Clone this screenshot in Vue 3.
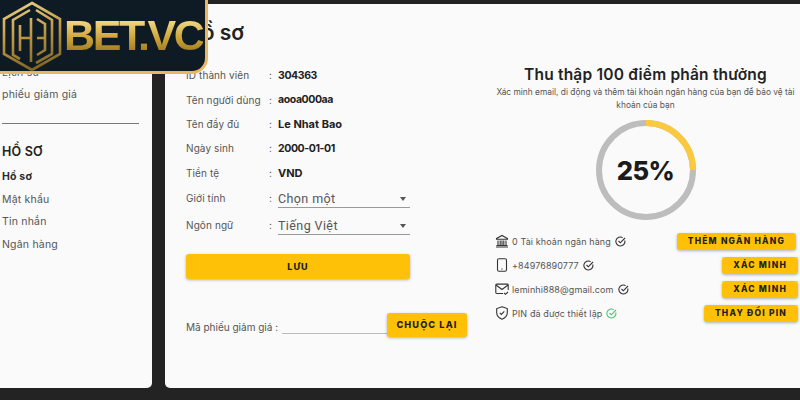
<script setup>
const profile = [
  { label: 'ID thành viên', value: '304363', numeric: true },
  { label: 'Tên người dùng', value: 'aooa000aa', numeric: true },
  { label: 'Tên đầy đủ', value: 'Le Nhat Bao' },
  { label: 'Ngày sinh', value: '2000-01-01', numeric: true },
  { label: 'Tiền tệ', value: 'VND' },
]
const selects = [
  ['Giới tính', 'Chọn một'],
  ['Ngôn ngữ', 'Tiếng Việt'],
]
const nav = ['Hồ sơ', 'Mật khẩu', 'Tin nhắn', 'Ngân hàng']
const tasks = [
  { icon: 'bank', text: '0 Tài khoản ngân hàng', action: 'THÊM NGÂN HÀNG', wide: true },
  { icon: 'phone', text: '+84976890777', action: 'XÁC MINH' },
  { icon: 'mail', text: 'leminhi888@gmail.com', action: 'XÁC MINH' },
  { icon: 'shield', text: 'PIN đã được thiết lập', action: 'THAY ĐỔI PIN', done: true },
]
</script>

<template>
  <div class="page">
    <aside class="side">
      <div class="side-link">Lịch sử</div>
      <div class="side-link">phiếu giảm giá</div>
      <hr class="rule" />
      <div class="side-head">HỒ SƠ</div>
      <div v-for="(n, i) in nav" :key="n" class="side-link" :class="{ active: i === 0 }">{{ n }}</div>
    </aside>

    <main class="panel">
      <section class="left">
        <h1 class="title">Hồ sơ</h1>
        <div v-for="p in profile" :key="p.label" class="row">
          <span class="label">{{ p.label }}</span>
          <span class="colon">:</span>
          <b class="value" :class="{ num: p.numeric }">{{ p.value }}</b>
        </div>
        <div v-for="s in selects" :key="s[0]" class="row select-row">
          <span class="label">{{ s[0] }}</span>
          <span class="colon">:</span>
          <div class="select">{{ s[1] }}<i class="caret"></i></div>
        </div>
        <button class="btn save">LƯU</button>
        <div class="voucher">
          <span class="label-v">Mã phiếu giảm giá :</span>
          <span class="v-input"></span>
          <button class="btn redeem">CHUỘC LẠI</button>
        </div>
      </section>

      <section class="right">
        <h2 class="r-title">Thu thập 100 điểm phần thưởng</h2>
        <p class="r-sub">Xác minh email, di động và thêm tài khoản ngân hàng của bạn để bảo vệ tài khoản của bạn</p>
        <div class="ring">
          <svg width="100" height="100" viewBox="0 0 100 100">
            <circle cx="50" cy="50" r="47" fill="none" stroke="#bdbdbd" stroke-width="6" />
            <path d="M50 3A47 47 0 0 1 97 50" fill="none" stroke="#fbc93d" stroke-width="6" />
          </svg>
          <span class="pct">25%</span>
        </div>
        <div class="tasks">
          <div v-for="t in tasks" :key="t.text" class="task">
            <svg class="t-icon" width="14" height="14" viewBox="0 0 14 14" fill="none" stroke="#333" stroke-width="1.1">
              <template v-if="t.icon === 'bank'">
                <path d="M1.5 4.5 7 1.5l5.5 3v.8h-11zM3 6.5v4.5M5.2 6.5v4.5M7 6.5v4.5M8.8 6.5v4.5M11 6.5v4.5M1.5 11.5h11M1 13h12" />
              </template>
              <template v-else-if="t.icon === 'phone'">
                <rect x="2.5" y="0.8" width="9" height="12.4" rx="1.5" />
                <path d="M6.4 11h1.2" />
              </template>
              <template v-else-if="t.icon === 'mail'">
                <path d="M8 11.5H1.7a.9.9 0 0 1-.9-.9V3a.9.9 0 0 1 .9-.9h10.6a.9.9 0 0 1 .9.9v5" />
                <path d="M1 3l6 4.5L13 3M9 11l1.5 1.3L13 10" />
              </template>
              <template v-else>
                <path d="M7 .8 12.3 2.6v4c0 3.200-2.300 5.500-5.300 6.600C4 12.100 1.700 9.800 1.700 6.600v-4z" />
                <path d="M4.800 6.900 6.400 8.500 9.300 5.400" />
              </template>
            </svg>
            <span class="t-text">{{ t.text }}</span>
            <svg class="t-check" width="11" height="11" viewBox="0 0 11 11" fill="none" :stroke="t.done ? '#4cc774' : '#333'" stroke-width="1.1">
              <path d="M9.800 4.500A4.500 4.500 0 1 1 7.700 1.600" />
              <path d="M3.500 5 5.300 6.800 10 2" />
            </svg>
            <button class="btn small" :class="{ wide: t.wide }">{{ t.action }}</button>
          </div>
        </div>
      </section>
    </main>

    <div class="logo">
      <svg width="62" height="72" viewBox="0 0 62 72" fill="none" stroke="url(#gold)" stroke-width="2.600">
        <defs>
          <linearGradient id="gold" gradientUnits="userSpaceOnUse" x1="10" y1="0" x2="30" y2="72">
            <stop offset="0" stop-color="#ecd68c" />
            <stop offset="0.55" stop-color="#bb9440" />
            <stop offset="1" stop-color="#7d6428" />
          </linearGradient>
        </defs>
        <path d="M32 3 60 19V54L32 70 4 54V19Z" />
        <path d="M30 10 13 20V55L20 59" />
        <path d="M20 25V51M31 18V62M20 38H31" />
        <path d="M36 10 52 20V54L36 63" />
        <path d="M37 19 45 24V50L37 55M37 38H45" />
      </svg>
      <span class="logo-text">BET.VC</span>
    </div>
  </div>
</template>

<style>
html, body { margin: 0; background: #232323; }
</style>

<style scoped>
.page {
  width: 800px;
  height: 400px;
  box-sizing: border-box;
  padding: 4px 0 12px;
  display: flex;
  gap: 13px;
  position: relative;
  overflow: hidden;
  background: #232323;
  font-family: Inter, "Noto Sans", sans-serif;
  color: #2b2b2b;
}
.side {
  width: 152px;
  flex: none;
  box-sizing: border-box;
  background: #fafafa;
  border-radius: 0 0 5px 0;
  padding: 61.500px 13px 0 2px;
}
.side-link {
  font-size: 10.500px;
  line-height: 14px;
  color: #555;
  letter-spacing: .2px;
  margin-bottom: 8.500px;
}
.side-link.active { font-weight: 700; color: #2b2b2b; }
.rule { border: 0; border-top: 1px solid #777; margin: 21px 0 20px; }
.side-head { font-size: 12.500px; line-height: 16px; font-weight: 600; color: #222; margin-bottom: 10px; letter-spacing: .2px; }
.panel {
  flex: 1;
  background: #fafafa;
  border-radius: 5px 0 0 5px;
  display: flex;
  box-sizing: border-box;
  padding: 0 0 0 21px;
}
.left { width: 305px; flex: none; }
.title { margin: 17px 0 18px; font-size: 21px; line-height: 24px; font-weight: 600; color: #222; }
.row {
  display: flex;
  align-items: center;
  height: 24.400px;
  font-size: 10px;
  width: 224px;
}
.label { width: 83px; flex: none; color: #555; letter-spacing: .1px; white-space: nowrap; }
.colon { width: 9px; flex: none; color: #555; }
.value { font-size: 11px; font-weight: 700; color: #222; }
.value.num { font-size: 10.500px; letter-spacing: -.4px; }
.select-row { height: 27px; }
.select {
  flex: 1;
  height: 18px;
  line-height: 17px;
  margin-top: 2px;
  box-sizing: border-box;
  border-bottom: 1px solid #9a9a9a;
  font-family: Roboto, sans-serif;
  font-size: 12.500px;
  letter-spacing: .4px;
  color: #555;
  display: flex;
  justify-content: space-between;
  align-items: center;
}
.caret {
  width: 0;
  height: 0;
  border: 3.500px solid transparent;
  border-top: 4px solid #555;
  border-bottom: 0;
  margin-right: 4px;
}
.btn {
  border: 0;
  background: #ffc107;
  border-radius: 3px;
  box-shadow: 0 1px 3px rgba(0, 0, 0, .3);
  font-family: Inter, sans-serif;
  font-weight: 800;
  color: #222;
  letter-spacing: 1.100px;
  padding: 0;
  cursor: pointer;
}
.save { display: block; width: 224px; height: 25px; margin-top: 15px; font-size: 9px; }
.voucher { display: flex; align-items: flex-end; margin-top: 34px; }
.label-v { font-size: 10px; color: #555; white-space: nowrap; width: 96px; padding-bottom: 4px; }
.v-input { width: 105px; border-bottom: 1px solid #bbb; height: 1px; margin-bottom: 3px; }
.redeem { width: 80px; height: 24px; font-size: 9.200px; }
.right { flex: 1; display: flex; flex-direction: column; align-items: center; padding-top: 62px; min-width: 0; }
.r-title { margin: 0; font-size: 15.500px; line-height: 18px; font-weight: 600; color: #222; letter-spacing: .2px; white-space: nowrap; }
.r-sub { margin: 2px 0 0; width: 308px; text-align: center; font-size: 8.400px; line-height: 13px; color: #555; }
.ring { position: relative; margin-top: 8px; width: 100px; height: 100px; }
.ring svg { display: block; }
.pct {
  position: absolute;
  inset: 0;
  display: flex;
  align-items: center;
  justify-content: center;
  font-size: 25.500px;
  font-weight: 800;
  letter-spacing: -.5px;
  color: #1b1b1b;
}
.tasks { align-self: stretch; margin-top: 9px; padding-left: 4px; padding-right: 2px; }
.task { display: flex; align-items: center; height: 24px; }
.t-icon { flex: none; margin-right: 3px; }
.t-text { font-size: 9px; color: #555; letter-spacing: .1px; white-space: nowrap; margin-right: 4px; }
.t-check { flex: none; }
.small { margin-left: auto; height: 17px; padding: 0 11px; font-size: 8.500px; letter-spacing: 1.200px; white-space: nowrap; }
.small.wide { margin-right: 2px; }
.logo {
  position: absolute;
  left: 0;
  top: 0;
  width: 208px;
  height: 74px;
  box-sizing: border-box;
  background: #0f1b24;
  border: solid #e9b665;
  border-width: 0 3px 3px 0;
  border-radius: 0 0 16px 0;
  display: flex;
  align-items: center;
}
.logo svg { flex: none; }
.logo-text {
  font-family: "Liberation Sans", sans-serif;
  font-weight: 700;
  font-size: 43px;
  letter-spacing: -2.400px;
  margin-left: 2px;
  background: linear-gradient(#f6df8e 15%, #cfa437 55%, #8a6a1e 95%);
  -webkit-background-clip: text;
  background-clip: text;
  color: transparent;
}
</style>
